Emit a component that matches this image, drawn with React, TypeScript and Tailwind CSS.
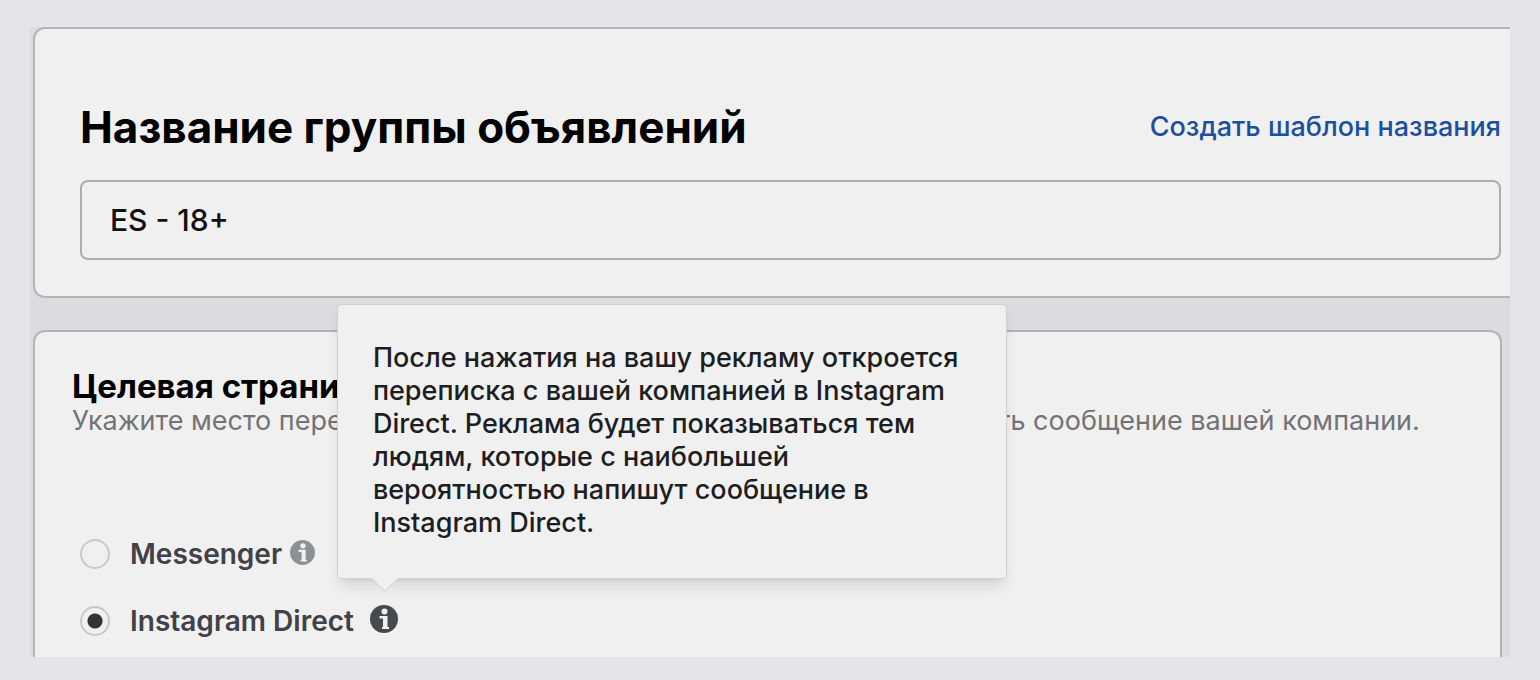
import { useState } from "react";

function InfoIcon({ className }: { className: string }) {
  return (
    <svg viewBox="0 0 28 28" className={className} aria-hidden="true">
      <circle cx="14" cy="14" r="14" fill="currentColor" />
      <circle cx="14.5" cy="6.5" r="3" fill="#f0f0f0" />
      <path d="M9.5 11h8v11H19v2h-7v-2h1v-8.5H9.5z" fill="#f0f0f0" />
    </svg>
  );
}

function Tooltip() {
  return (
    <div
      role="tooltip"
      className="absolute bottom-full -left-[33px] mb-[26px] w-[670px] rounded-sm border border-[#d0d0d2] bg-[#f0f0f0] px-[35px] pt-9 pb-[39px] text-[27px] leading-[33px] font-medium text-[#1c1e21] shadow-lg"
    >
      После нажатия на вашу рекламу откроется переписка с вашей компанией в Instagram Direct. Реклама будет
      показываться тем людям, которые с наибольшей вероятностью напишут сообщение в Instagram Direct.
      <svg viewBox="0 0 28 15" className="absolute top-full left-[33px] -mt-px h-[15px] w-7" aria-hidden="true">
        <path d="M0 0h28L14 14z" fill="#f0f0f0" />
        <path d="M0 1L14 14L28 1" fill="none" stroke="#d0d0d2" />
      </svg>
    </div>
  );
}

const radioClass =
  "size-[30px] shrink-0 appearance-none rounded-full border-2 border-[#c9c9cb] checked:bg-[radial-gradient(circle,#333336_7px,transparent_8px)]";

export default function App() {
  const [name, setName] = useState("ES - 18+");
  const [target, setTarget] = useState("instagram");

  return (
    <main className="flex min-h-screen flex-col bg-[#e4e4e9] px-[30px] pt-[27px] pb-[23px] font-['Inter','Liberation_Sans',sans-serif]">
      <div className="flex flex-1 flex-col bg-[#dcdcdf] pl-[3px]">
        {/* Ad set name */}
        <section className="rounded-l-xl border-y-2 border-l-2 border-[#b4b4b8] bg-[#f0f0f0] pt-[72px] pr-[9px] pb-9 pl-[45px]">
          <div className="flex items-center justify-between">
            <label htmlFor="adset-name" className="text-[44px] leading-[52px] font-bold text-black">
              Название группы объявлений
            </label>
            <a href="#template" className="text-[27px] leading-8 font-medium text-[#1d4f9f]">
              Создать шаблон названия
            </a>
          </div>
          <input
            id="adset-name"
            type="text"
            value={name}
            onChange={(e) => setName(e.target.value)}
            className="mt-[27px] block h-20 w-full rounded-lg border-2 border-[#adadaf] bg-transparent px-7 text-[30px] font-medium text-[#111111] outline-none"
          />
        </section>

        {/* Destination */}
        <section className="mt-8 mr-2 flex-1 rounded-t-xl border-x-2 border-t-2 border-[#b4b4b8] bg-[#f0f0f0] pt-9 pl-[37px]">
          <h2 className="text-[33px] leading-9 font-bold text-black">Целевая страница</h2>
          <p className="text-[27px] leading-[34px] whitespace-nowrap text-[#737375]">
            Укажите место переписки, из которого пользователи смогут отправить сообщение вашей компании.
          </p>
          <div className="mt-[98px] flex flex-col gap-[31px] pl-2 text-[28px] leading-9 font-semibold text-[#414147]">
            <div className="flex items-center">
              <input
                id="messenger"
                type="radio"
                name="target"
                checked={target === "messenger"}
                onChange={() => setTarget("messenger")}
                className={radioClass}
              />
              <label htmlFor="messenger" className="pl-5">
                Messenger
              </label>
              <button type="button" aria-label="Messenger info" className="mb-1 ml-2">
                <InfoIcon className="size-[25px] text-[#8f8f98]" />
              </button>
            </div>
            <div className="flex items-center">
              <input
                id="instagram"
                type="radio"
                name="target"
                checked={target === "instagram"}
                onChange={() => setTarget("instagram")}
                className={radioClass}
              />
              <label htmlFor="instagram" className="pl-5">
                Instagram Direct
              </label>
              <div className="relative mb-1 ml-4">
                <button type="button" aria-label="Instagram Direct info" className="block">
                  <InfoIcon className="size-7 text-[#48484f]" />
                </button>
                <Tooltip />
              </div>
            </div>
          </div>
        </section>
      </div>
    </main>
  );
}
